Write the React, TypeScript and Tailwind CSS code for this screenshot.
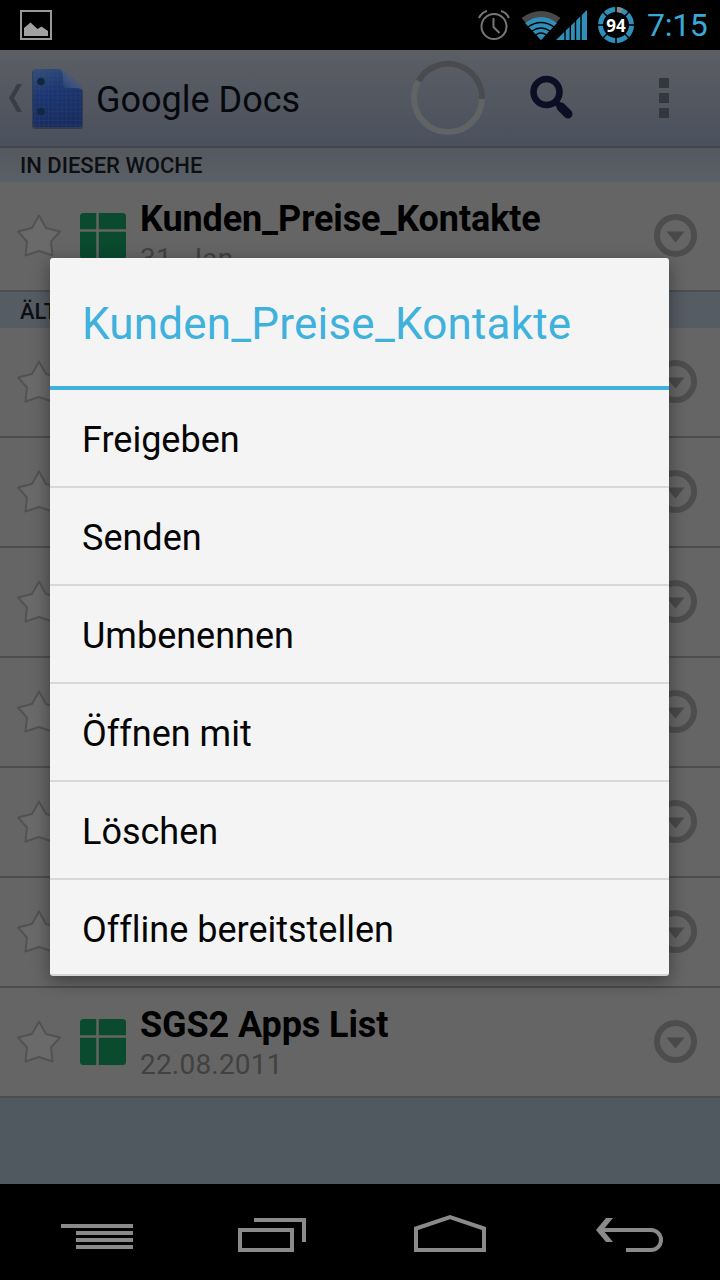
import React from 'react';

interface DocumentRowProps {
  title?: string;
  date?: string;
}

const documents: DocumentRowProps[] = [
  {},
  {},
  {},
  {},
  {},
  {},
  { title: 'SGS2 Apps List', date: '22.08.2011' },
];

const menuItems = ['Freigeben', 'Senden', 'Umbenennen', 'Öffnen mit', 'Löschen', 'Offline bereitstellen'];

function BatteryRing() {
  return (
    <div className="relative ml-[11px] flex h-9 w-9 items-center justify-center">
      <svg className="absolute inset-0" width="36" height="36" viewBox="0 0 36 36" fill="none">
        <circle cx="18" cy="18" r="15.5" stroke="#2f8fb8" strokeWidth="5" />
        <path d="M18 2.5a15.5 15.5 0 0 1 6 1.2" stroke="#888" strokeWidth="5" />
        {[0, 45, 90, 135, 180, 225, 270, 315].map((angle) => (
          <path key={angle} d="M18 0v6" stroke="#000" strokeWidth="1.6" transform={`rotate(${angle} 18 18)`} />
        ))}
      </svg>
      <span className="relative font-['Open_Sans',sans-serif] text-[17px] leading-none font-bold text-white">94</span>
    </div>
  );
}

function StatusBar() {
  return (
    <header className="flex h-[50px] items-center bg-black pr-[11px] pl-5">
      <svg width="32" height="30" viewBox="0 0 32 30" fill="none">
        <path d="M1 1h30v28H1z" stroke="#999" strokeWidth="2" />
        <path d="M4 26v-8l6.500-5.500 7 6.500 4-2.500 6.500 4.500v5z" fill="#a2a2a2" />
      </svg>
      <svg className="ml-auto" width="34" height="32" viewBox="0 0 34 32" fill="none" stroke="#777" strokeWidth="2">
        <circle cx="17" cy="17.500" r="12.500" />
        <path d="M16.500 9v9l6 6M2 9q3-6 8-7M32 9q-3-6-8-7" />
      </svg>
      {/* Wifi */}
      <svg className="ml-[10px]" width="40" height="32" viewBox="0 0 40 32" fill="none">
        <path d="M0.500 9Q20-5 39.500 9L20 31z" fill="#494949" />
        <path d="M4 14Q20 2 36 14L20 31z" fill="#2f8fb8" />
        <path d="M7 18q13-9 26 0M11 22q9-6 18 0M14.500 26q5.500-4 11 0" stroke="#000" strokeWidth="1.400" />
      </svg>
      {/* Mobile signal */}
      <svg className="-ml-[5px]" width="31" height="32" viewBox="0 0 31 32">
        <path d="M0 31L31 1v30z" fill="#2f8fb8" />
        <path d="M9 20v12M14.300 15v17M19.500 10v22M25 4v28" stroke="#000" strokeWidth="1.400" />
      </svg>
      <BatteryRing />
      <span className="ml-[13px] w-[62px] text-[32px] leading-none -tracking-[0.3px] whitespace-nowrap text-[#3aa9d8]">7:15</span>
    </header>
  );
}

function DocsLogo() {
  return (
    <svg width="54" height="64" viewBox="0 0 54 64">
      <defs>
        <linearGradient id="paper" x1="0" y1="0" x2="0.3" y2="1">
          <stop offset="0" stopColor="#344f78" />
          <stop offset="0.45" stopColor="#1c3670" />
          <stop offset="1" stopColor="#182c60" />
        </linearGradient>
        <linearGradient id="fold" x1="1" y1="0" x2="0" y2="1">
          <stop offset="0.4" stopColor="#4a5d80" />
          <stop offset="1" stopColor="#20386c" />
        </linearGradient>
        <pattern id="grid" width="4.5" height="4.5" patternUnits="userSpaceOnUse">
          <path d="M4.500 0H0v4.500" fill="none" stroke="#40588c" strokeWidth="0.6" opacity="0.5" />
        </pattern>
      </defs>
      <path d="M5 4h24l24 20v36q0 3-3 3H5q-3 0-3-3V7q0-3 3-3z" fill="#2c3240" opacity="0.7" />
      <path d="M5 3h24q3 0 5 2l16 15q2 2 2 5v33q0 3-3 3H6q-3 0-3-3V6q0-3 2-3z" fill="url(#paper)" />
      <path d="M5 3h24q3 0 5 2l16 15q2 2 2 5v33q0 3-3 3H6q-3 0-3-3V6q0-3 2-3z" fill="url(#grid)" />
      <path d="M29 3q3 0 5 2l16 15q2 2 2 4-2-2-5-2H37q-4 0-4-4V10q0-5-4-7z" fill="url(#fold)" />
      <circle cx="11" cy="15.500" r="3.800" fill="#14263d" />
      <circle cx="11" cy="45.500" r="3.800" fill="#14263d" />
    </svg>
  );
}

function ActionBar() {
  return (
    <div className="flex h-[98px] items-center border-b-2 border-[#42464c] bg-linear-to-b from-[#5c5e64] to-[#4a515d] pl-2">
      <svg width="14" height="28" viewBox="0 0 14 28" fill="#393d45">
        <path d="M9 0h5L6 14l8 14H9L1 14z" />
      </svg>
      <div className="ml-2 flex">
        <DocsLogo />
      </div>
      <h1 className="ml-[12px] pt-[3px] text-[36px] leading-none whitespace-nowrap text-[#06080d]">Google Docs</h1>
      <div className="ml-auto flex items-center pr-[51px]">
        <svg width="76" height="76" viewBox="0 0 76 76" fill="none" strokeWidth="6">
          <circle cx="38" cy="38" r="34" stroke="#626365" />
          <path d="M8.500 21A34 34 0 0 1 72 39" stroke="#494b4f" />
        </svg>
        <svg className="ml-[44px]" width="44" height="46" viewBox="0 0 44 46" fill="none" stroke="#0c0f23">
          <circle cx="16.500" cy="17" r="13" strokeWidth="6.500" />
          <path d="M26 27l5 5" strokeWidth="6" />
          <path d="M31 32l7 7" strokeWidth="9" strokeLinecap="round" />
        </svg>
        <div className="ml-[85px] flex flex-col gap-[5px]">
          <span className="h-[10px] w-[10px] bg-[#34373e]" />
          <span className="h-[10px] w-[10px] bg-[#34373e]" />
          <span className="h-[10px] w-[10px] bg-[#34373e]" />
        </div>
      </div>
    </div>
  );
}

function DocumentRow({ title, date }: DocumentRowProps) {
  return (
    <li className="flex h-[110px] border-b-2 border-[#4d4d4f] bg-[#656565] pr-[23px] pl-4">
      <svg className="mt-[31px] shrink-0" width="46" height="46" viewBox="0 0 46 46">
        <path
          d="M23 2.500l7 12.500L44 18.500 35 28.500l1.500 14L23 38 9.500 42.500l1.500-14L2 18.500 16 15z"
          fill="#6a6a6a"
          stroke="#525252"
          strokeWidth="2"
          strokeLinejoin="round"
        />
      </svg>
      {title && (
        <>
          <svg className="mt-[31px] ml-[18px] shrink-0" width="46" height="46" viewBox="0 0 46 46">
            <rect width="46" height="46" rx="3.500" fill="#0a4a2e" />
            <path d="M17.500 0v46M0 17.500h46" stroke="#656565" strokeWidth="2.500" />
          </svg>
          <div className="ml-[14px] pt-4 whitespace-nowrap">
            <div className="text-[36px] leading-[42px] font-bold -tracking-[0.1px] text-black">{title}</div>
            <div className="pt-px text-[28px] leading-9 tracking-[0.2px] text-[#414141]">{date}</div>
          </div>
        </>
      )}
      <svg className="mt-[32px] ml-auto shrink-0" width="43" height="43" viewBox="0 0 43 43">
        <circle cx="21.500" cy="21.500" r="18.500" fill="none" stroke="#4d4d4d" strokeWidth="6" />
        <path d="M12.500 17.500h18l-9 11z" fill="#494949" />
      </svg>
    </li>
  );
}

function ContextMenu() {
  return (
    <div className="absolute top-[258px] left-[50px] h-[718px] w-[619px] overflow-hidden rounded-[3px] border-b-2 border-[#d5d5d5] bg-[#f4f4f4] shadow-[0_5px_18px_rgba(0,0,0,0.4)]">
      <h2 className="flex h-[132px] items-center border-b-4 border-[#3fb1dd] px-8 pt-1 text-[44px] tracking-[0.2px] whitespace-nowrap text-[#3fb1dd]">
        Kunden_Preise_Kontakte
      </h2>
      <ul>
        {menuItems.map((item) => (
          <li
            key={item}
            className="flex h-[98px] items-center border-b-2 border-[#d8d8d8] px-8 pt-[3px] text-[36px] whitespace-nowrap text-[#050505] [font-variant-ligatures:none] last:border-transparent"
          >
            {item}
          </li>
        ))}
      </ul>
    </div>
  );
}

function NavigationBar() {
  return (
    <nav className="flex h-24 items-center bg-black pt-2 pl-[60px] text-[#8a8a8a]">
      <svg width="74" height="44" viewBox="0 0 74 44" stroke="currentColor" strokeWidth="4">
        <path d="M1 12h72M16 19h57M16 26h57M16 33h57" />
      </svg>
      <svg className="ml-[102px]" width="72" height="44" viewBox="0 0 72 44" fill="none" stroke="currentColor" strokeWidth="4">
        <path d="M4 16h52v20H4zM18 6h50v22" />
      </svg>
      <svg className="ml-[105px]" width="74" height="44" viewBox="0 0 74 44" fill="none" stroke="currentColor" strokeWidth="4">
        <path d="M3 36V14.500L37 3l34 11.500V36z" />
      </svg>
      <svg className="ml-[107px]" width="72" height="44" viewBox="0 0 72 44" fill="none" stroke="currentColor" strokeWidth="4">
        <path d="M7 16h50a10 10 0 0 1 0 20H32" />
        <path d="M19 4h-7L2 16l10 12h7L9 16z" fill="currentColor" stroke="none" />
      </svg>
    </nav>
  );
}

export default function App() {
  return (
    <div className="relative flex h-[1280px] w-[720px] flex-col overflow-hidden bg-[#505860] font-[Roboto,sans-serif]">
      <StatusBar />
      <ActionBar />
      <main className="flex-1">
        <div className="flex h-[34px] items-center bg-linear-to-b from-[#55585d] to-[#5a6068] pl-5 text-[22px] font-medium text-[#0d0f12]">
          IN DIESER WOCHE
        </div>
        <ul>
          <DocumentRow title="Kunden_Preise_Kontakte" date="31. Jan." />
        </ul>
        <div className="flex h-9 items-center bg-[#565c64] pt-[2px] pl-5 text-[22px] font-medium text-[#0d0f12]">ÄLTER</div>
        <ul>
          {documents.map((doc, index) => (
            <DocumentRow key={index} {...doc} />
          ))}
        </ul>
      </main>
      <NavigationBar />
      <ContextMenu />
    </div>
  );
}
